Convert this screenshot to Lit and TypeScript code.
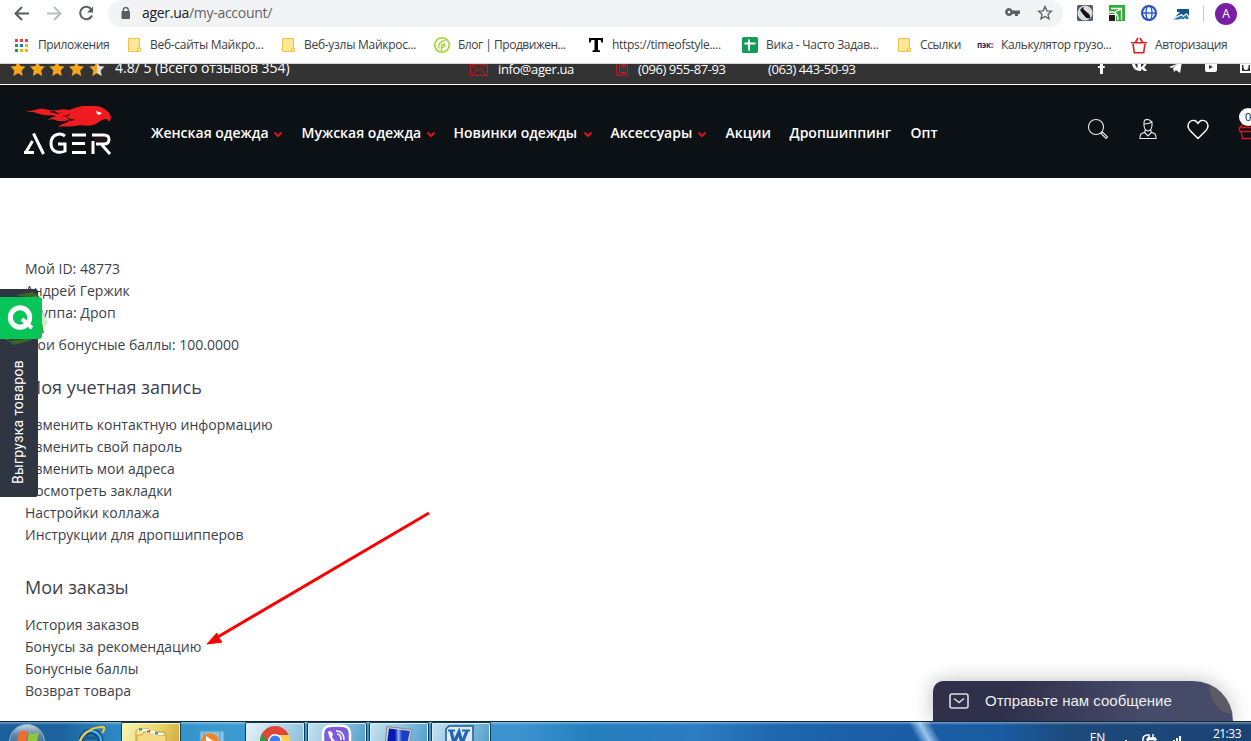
import { LitElement, html, css, svg } from "lit";
import { customElement } from "lit/decorators.js";
import { styleMap } from "lit/directives/style-map.js";

const icon = (w: number, h: number, body: unknown) =>
  html`<svg width=${w} height=${h} viewBox="0 0 ${w} ${h}" fill="none">${body}</svg>`;

const folder = icon(13, 16, svg`<path d="M.5 1.500h11v9.500h1v3.500h-12z" fill="#ffe694" stroke="#e8c44e"/><path d="M9.500 14v-3h2" stroke="#e8c44e"/>`);
const apps = icon(14, 14, svg`
  <path d="M0 1h3v3H0zM5 1h3v3H5zM10 1h3v3h-3z" fill="#ea4335"/>
  <path d="M0 6h3v3H0zM0 11h3v3H0z" fill="#1e9e54"/><path d="M5 6h3v3H5z" fill="#1a73e8"/>
  <path d="M10 6h3v3h-3zM5 11h3v3H5zM10 11h3v3h-3z" fill="#fbb004"/>`);
const blog = icon(16, 16, svg`<circle cx="8" cy="8" r="7.200" stroke="#a4d233" stroke-width="1.600"/><path d="M7.500 14.500V9q0-2 3.500-2M5 11.500q-1.500-7 6.500-8M8 10.500q2.500 0 3-3" stroke="#a4d233" stroke-width="1.400"/>`);
const bigT = icon(16, 16, svg`<path d="M1 1h14v4.500h-1.500l-1-2.500H10v10l2 .5V15H4.500v-1.500l2-.5V3h-3l-1 2.500H1z" fill="#000"/>`);
const sheets = icon(16, 16, svg`<rect width="16" height="16" rx="1.500" fill="#0f9d58"/><path d="M7 2.500v11M2.500 6.500h11" stroke="#fff" stroke-width="2"/>`);
const pek = html`<span class="pek">пэк<b>:</b></span>`;
const redBasket = icon(16, 17, svg`<path d="M0 5.700h16M2 7l1.300 8.700h9.400L14 7M4 6l3-5M12 6L9 1" stroke="#e02020" stroke-width="1.600"/>`);

interface Bookmark { w: number; gap: number; icon: unknown; label: string; ls: number }
const BOOKMARKS: Bookmark[] = [
  { w: 113, gap: 23, icon: apps, label: "Приложения", ls: -0.4 },
  { w: 154, gap: 22, icon: folder, label: "Веб-сайты Майкро...", ls: -0.28 },
  { w: 152, gap: 22, icon: folder, label: "Веб-узлы Майкрос...", ls: -0.28 },
  { w: 154, gap: 24, icon: blog, label: "Блог | Продвижен...", ls: -0.48 },
  { w: 154, gap: 24, icon: bigT, label: "https://timeofstyle....", ls: -0.3 },
  { w: 156, gap: 24, icon: sheets, label: "Вика - Часто Задав...", ls: -0.3 },
  { w: 79, gap: 22, icon: folder, label: "Ссылки", ls: -0.35 },
  { w: 154, gap: 24, icon: pek, label: "Калькулятор грузо...", ls: -0.38 },
  { w: 110, gap: 24, icon: redBasket, label: "Авторизация", ls: -0.4 },
];

const NAV = [
  { w: 150.5, label: "Женская одежда", sub: 122 },
  { w: 152, label: "Мужская одежда", sub: 124 },
  { w: 157, label: "Новинки одежды", sub: 129 },
  { w: 115, label: "Аксессуары", sub: 86 },
  { w: 64, label: "Акции", sub: 0 },
  { w: 121, label: "Дропшиппинг", sub: 0 },
  { w: 40, label: "Опт", sub: 0 },
];

@customElement("browser-chrome")
class BrowserChrome extends LitElement {
  static styles = css`
    :host { display: block; height: 64px; box-sizing: border-box; background: #fff; border-bottom: 1px solid #d4d5d7; overflow: hidden; color: #3c4043; font-family: "Open Sans", sans-serif; }
    svg { display: block; flex: none; }
    .bar { display: flex; align-items: center; height: 27px; padding-left: 14px; }
    .nav { display: flex; width: 94px; gap: 16px; }
    .omni { display: flex; align-items: center; width: 955px; height: 27px; box-sizing: border-box; background: #f1f3f4; border-radius: 14px; padding: 0 10px 0 13px; }
    .url { flex: 1; margin: -1px 0 0 11px; font: 14px/20px "Open Sans", sans-serif; letter-spacing: -.29px; color: #5f6368; white-space: nowrap; }
    .url b { font-weight: 400; color: #202124; }
    .star { margin-left: 17px; }
    .ext { display: flex; align-items: center; gap: 16px; margin-left: 14px; }
    .sep { width: 1px; height: 16px; background: #ccc; margin-left: -3px; }
    .avatar { width: 22px; height: 22px; border-radius: 50%; background: #7b1fa2; color: #fff; font-size: 12px; line-height: 22px; text-align: center; margin-left: -5px; }
    .marks { display: flex; align-items: center; height: 36px; padding-left: 15px; }
    .mark { display: flex; align-items: center; flex: none; }
    .ic { flex: none; }
    .lb { white-space: nowrap; font-size: 12px; line-height: 18px; }
    .pek { display: block; font: 700 8px/12px "Open Sans", sans-serif; color: #1a1a5c; letter-spacing: -.1px; }
    .pek b { color: #e02020; }
  `;
  render() {
    return html`
      <div class="bar">
        <div class="nav">
          ${icon(16, 20, svg`<path d="M15 9.500H2M8 3L1.500 9.500 8 16" stroke="#5a5d61" stroke-width="2"/>`)}
          ${icon(16, 20, svg`<path d="M1 9.500h13M8 3l6.500 6.500L8 16" stroke="#babcbe" stroke-width="2"/>`)}
          ${icon(16, 20, svg`<path d="M13.500 5.500A6.200 6.200 0 1 0 14 11.500" stroke="#5a5d61" stroke-width="2"/><path d="M15 2.500v6H9z" fill="#5a5d61"/>`)}
        </div>
        <div class="omni">
          ${icon(10, 14, svg`<rect x=".5" y="4" width="8.500" height="8" rx="1" fill="#5a5d61"/><path d="M2.300 5V3a2.500 2.500 0 0 1 5 0v2" stroke="#5a5d61" stroke-width="1.300"/>`)}
          <span class="url"><b>ager.ua</b>/my-account/</span>
          ${icon(15, 15, svg`<path fill-rule="evenodd" d="M4 2a4 4 0 0 1 3.600 2.500H15V8h-2v2h-3V8H7.600A4 4 0 1 1 4 2zm0 2.700a1.400 1.400 0 1 0 0 2.800 1.400 1.400 0 0 0 0-2.800z" fill="#5a5d61"/>`)}
          <span class="star">${icon(16, 17, svg`<path d="M8 1.500l1.900 4.300 4.600.4-3.500 3.100 1 4.600L8 11.500l-4 2.400 1-4.600L1.500 6.200l4.600-.4z" stroke="#5a5d61" stroke-width="1.300"/>`)}</span>
        </div>
        <div class="ext">
          ${icon(16, 17, svg`<rect width="16" height="16" rx="1.500" fill="#515b69"/><circle cx="8" cy="8" r="7.500" fill="#d9dde2"/><path d="M5.500 4L12 9.500l.8 3.500-3.600-.5L4 6z" fill="#111" stroke="#111"/><path d="M3.500 5.500l3-3" stroke="#111" stroke-width="1.500"/>`)}
          ${icon(16, 17, svg`<path d="M0 0h16v16H7V9H0z" fill="#2fad36"/><path d="M0 10h6v6H0z" fill="#241c1c"/><path d="M2 3.500h10.500V15M0 7h4q5 1 5 8M12 4L5 7.500" stroke="#fff" stroke-width="1.300"/>`)}
          ${icon(16, 17, svg`<circle cx="8" cy="8" r="7" stroke="#234ec2" stroke-width="2" fill="#edf3ff"/><ellipse cx="8" cy="8" rx="3" ry="7" stroke="#234ec2" stroke-width="1.300"/><path d="M1 8h14" stroke="#234ec2" stroke-width="1.300"/>`)}
          ${icon(17, 14, svg`<path d="M4 2h12v7l-2.500-3-3 2.500L8.500 7 2 10l5-5H4z" fill="#14558b"/><path d="M0 12.500l8-4 2.500 1.500 3-2.500L16 12h-3l-1-1-2 1.500-2-1-2 1z" fill="#2776ad"/>`)}
          <span class="sep"></span><span></span>
          <span class="avatar" style="margin-left:-21px">A</span>
        </div>
      </div>
      <div class="marks">
        ${BOOKMARKS.map((b) => html`<div class="mark" style=${styleMap({ width: b.w + "px" })}>
          <span class="ic" style=${styleMap({ width: b.gap + "px" })}>${b.icon}</span><span class="lb" style=${styleMap({ letterSpacing: b.ls + "px" })}>${b.label}</span></div>`)}
      </div>`;
  }
}

@customElement("shop-header")
class ShopHeader extends LitElement {
  static styles = css`
    :host { display: block; color: #fff; font-family: "Open Sans", sans-serif; }
    svg { display: block; flex: none; }
    .top { display: flex; align-items: center; height: 20px; background: #333; border-bottom: 1px solid #fff; overflow: hidden; white-space: nowrap; padding-left: 10px; }
    .top > * { flex: none; }
    .rate { width: 355px; font-size: 14px; line-height: 20px; margin-top: -12px; }
    .mail, .p1, .p2 { font-size: 13px; line-height: 20px; margin-top: -11px; letter-spacing: -.42px; }
    .stars { width: 105px; margin-top: -12px; }
    .mi { width: 28px; margin-top: -9px; }
    .mail { width: 118px; letter-spacing: -.4px; }
    .pi { width: 22px; margin-top: -9px; }
    .p1 { width: 130px; }
    .p2 { width: 323px; }
    .soc { margin-top: -14px; }
    .head { display: flex; align-items: center; height: 93px; background: #0c1115; box-sizing: border-box; padding-left: 23px; overflow: hidden; }
    .logo { width: 128px; margin-top: -2px; }
    .menu { display: flex; width: 936px; margin-top: 2px; }
    .item { display: grid; font-size: 14px; font-weight: 600; line-height: 20px; white-space: nowrap; align-items: center; flex: none; }
    .item svg { margin-top: 3px; }
    .acts { flex: none; margin-top: -1px; }
    text { font: 11px "Open Sans", sans-serif; }
  `;
  render() {
    const star = (x: number, fill: string) => svg`<path transform="translate(${x} 0)" d="M7.500 0l2.300 5 5.200.6-3.800 3.800 1 5.600-4.700-2.700L2.800 15l1-5.600L0 5.600 5.200 5z" fill=${fill}/>`;
    return html`
      <div class="top">
        <span class="stars">${icon(105, 15, svg`<defs><linearGradient id="h"><stop offset=".5" stop-color="#f9a51b"/><stop offset=".5" stop-color="#ddd"/></linearGradient></defs>
          ${star(0.5, "#f9a51b")}${star(20, "#f9a51b")}${star(39.500, "#f9a51b")}${star(59, "#f9a51b")}${star(79.500, "url(#h)")}`)}</span>
        <span class="rate">4.8/ 5 (Всего отзывов 354)</span>
        <span class="mi">${icon(18, 14, svg`<path d="M.5 1.500h17v11H.5zM2 2l7 5.500L16 2M2 12l5-5m9 5l-5-5" stroke="#c9161c"/>`)}</span>
        <span class="mail">info@ager.ua</span>
        <span class="pi">${icon(13, 14, svg`<path d="M.5 0v12.500h11V0M3.500 0v12" stroke="#c9161c"/><path d="M5 0h5v4H5zM5 5h1v1H5zM7 5h1v1H7zM9 5h1v1H9zM5 7h1v1H5zM7 7h1v1H7zM9 7h1v1H9zM5 9h5v2H5z" fill="#c9161c"/>`)}</span>
        <span class="p1">(096) 955-87-93</span>
        <span class="p2">(063) 443-50-93</span>
        <span class="soc">${icon(165, 14, svg`<g fill="#fff">
          <path d="M9 14V8H7V6h2V4c0-2 1-3 3-3h2v2h-1c-1 0-1 .5-1 1v2h2l-.5 2H12v6z"/>
          <path d="M41 4h3c1 3 2 4 2.500 4V4H50v3c1 0 2-1.500 3-3h2.500c-.5 1.500-1.500 3-2.500 3.500 1 .5 2 1.500 3 3.500h-3c-1-1-2-2-3-2v2c-5 0-8-2-9-7z"/>
          <path d="M78 7l13-5-2 11-4-3-2 2-1-4 5-4-6 4z"/>
          <path fill-rule="evenodd" d="M115 2h9q2 0 2 2v6q0 2-2 2h-8q-2 0-2-2V4q0-2 1-2zm3 3v4l4-2z"/>
          <path fill-rule="evenodd" d="M149 1h12v12h-12zm2 4v6h8V5h-1.500q.5 5-2.500 5t-2.500-5z"/><circle cx="155" cy="6.500" r="1.800"/></g>`)}</span>
      </div>
      <div class="head">
        <div class="logo">${icon(90, 50, svg`
          <path d="M2 4C9 7 14 2 21 3c6 1 7 2 14 1 4-1 7-1 10 0 3 0 5-2 10-3 7-2 16-2 23 0 6 3 9 6 10 10 0 2-1 3-2 5-1-3-4-4-7-2-4 2-5 4-9 5-7 2-11-1-18 1-7 1-12 0-17 1 4-4 8-3 12-7-5 1-6 1-11 1-4 0-5-3-11-1 3-3 5-3 8-3-4-3-8-1-12-2-7-1-7-3-14-3C6 6 4 5 2 4z" fill="#f01b20"/>
          <path d="M26 6q5-2 7 0t7 0q-5 3-9 1zM39 10q6 0 8-3-1 5-8 3zM49 15q-4-1-5-4 3 3 8 2z" fill="#0c1115"/>
          <path d="M73 5l6 2q-3 3-5 1z" fill="#fff"/>
          <path d="M71 29h12v7H71z" fill="#241314"/>
          <path d="M1 46.500h10M3 46L9.500 35M10.500 27.500L20.500 48M42 30q-4-3-8-1.500-6 2-6 9t6 8.500q4 1 8-1v-7h-7M49 29h14M49 37.500h13M49 46.500h14M70 35v13M69 29h12q5 0 5 4.500t-5 4.500h-8M79 39l8 9" stroke="#fff" stroke-width="3"/>`)}</div>
        <nav class="menu">
          ${NAV.map((n) => html`<div class="item" style=${styleMap({ width: n.w + "px", gridTemplateColumns: (n.sub || n.w) + "px 10px" })}><span>${n.label}</span>${n.sub ? icon(10, 7, svg`<path d="M1.500 1.500L5 5l3.500-3.500" stroke="#d9161c" stroke-width="2"/>`) : ""}</div>`)}
        </nav>
        <div class="acts">${icon(164, 46, svg`
          <g stroke="#e8e8e8" stroke-width="1.100"><circle cx="9" cy="19" r="7.500"/><path d="M14 25.500l1.500-1.500 5 5-1.500 1.500z"/>
          <path d="M58 12q3-2 7 2v3q0 5-4 6-4-1-4-6v-3q1-2 1-2zM57 16q5 0 8-2M58 22v3l3 3 3-3v-3M58 24l-4 2q-1 1-1 4.500h16q0-3.500-1-4.500l-4-2"/></g>
          <path d="M111 30.500l-8-8q-4-5 0-9 5-3 8 2 3-5 8-2 4 4 0 9z" stroke="#fff" stroke-width="1.400"/>
          <path d="M152 19.500h14M154 23l1.500 7.500H166M153 19l7-6M152 19.500l1 4h13" stroke="#d9161c" stroke-width="1.300"/>
          <circle cx="161" cy="9" r="9" fill="#fff"/><text x="158" y="13" fill="#111">0</text>`)}</div>
      </div>`;
  }
}

@customElement("task-bar")
class TaskBar extends LitElement {
  static styles = css`
    :host { display: flex; height: 20px; box-sizing: border-box; border-top: 1px solid #10263b; overflow: hidden; position: relative; flex: none;
      background: linear-gradient(#ffffff66, #ffffff00 3px), linear-gradient(61deg, transparent 803px, #9cc5ef 813px, transparent 823px), linear-gradient(90deg, #1c609c 0, #1b629e 60px, #2e8bc6 120px, #3b9bd1 230px, #3b93cf 520px, #257fbf 590px, #2c7cc3 700px, #1d66ad 780px, #1a60a9 850px, #195ca2 1000px, #1d4a7b 1070px, #1a4375 1251px); }
    svg { display: block; }
    .slot { height: 20px; overflow: hidden; flex: none; box-sizing: border-box; }
    .b { width: 60px; margin-right: 2px; border: 1px solid #143a54; border-bottom: 0; border-radius: 2px 2px 0 0; box-shadow: inset 0 0 0 1px #d9effa; background: linear-gradient(110deg, #c8e2ef, #8ec4e0 50%, #559fcb); }
    .f { background: linear-gradient(110deg, #faf4b4, #e5d668 60%, #d3a940); box-shadow: inset 0 0 0 1px #fff6bb; }
    .chrome { background: linear-gradient(110deg, #e6f1f6, #b0d4e7 60%, #8cbedb); }
    .tray { display: flex; flex: 1; justify-content: flex-end; color: #fff; font: 12px/16px "Open Sans", sans-serif; padding-right: 10px; }
    .en { margin: 8px 20px 0 0; height: 16px; white-space: nowrap; letter-spacing: -.3px; }
    .time { margin: 4px 0 0 24px; letter-spacing: -.5px; white-space: nowrap; }
  `;
  render() {
    return html`
      <div class="slot" style="width:121px">${icon(121, 20, svg`<defs><linearGradient id="o" x2="0" y2="1"><stop stop-color="#c5d8e6"/><stop offset=".3" stop-color="#5f86a6"/><stop offset="1" stop-color="#164d80"/></linearGradient></defs>
        <circle cx="27" cy="20" r="17.500" fill="url(#o)" stroke="#8cb5d0"/>
        <path d="M19 10q5-3 9 0l-2 10h-9z" fill="#ef6a2d"/><path d="M29 11q5 2 10-1l-2 10H27z" fill="#8dc63f"/>
        <circle cx="91" cy="19" r="9.500" stroke="#114d83" stroke-width="6"/><circle cx="91" cy="19" r="10" stroke="#4fb8ed" stroke-width="2"/><path d="M84 16h15" stroke="#18588d" stroke-width="3"/><path d="M79 20q8-15 24-15 3 1-1 6" stroke="#f5c63a" stroke-width="2"/>`)}</div>
      <div class="slot b f">${icon(58, 20, svg`<path d="M14 20V8l2-2h11l2 3h14v11z" fill="#f8e6a0" stroke="#c89d38"/><path d="M15 12h5l2-3h12l2 3h8v8H15z" fill="#f6db82" stroke="#c9a442"/><path d="M16 7h11M24 9h9M32 11h9" stroke="#fff" stroke-width="2"/><path d="M17 6.500h3" stroke="#159a3b" stroke-width="2"/><path d="M25 8.500h3" stroke="#d54029" stroke-width="2"/><path d="M33 10.500h3" stroke="#198cd5" stroke-width="2"/>`)}</div>
      <div class="slot" style="width:62px">${icon(62, 20, svg`<path d="M17 9h20v11H17zM21 9h20v11H21z" fill="#8cc5e4" stroke="#4f9fcc"/><circle cx="27" cy="20" r="9" fill="#f38521"/><path d="M23 14l9 6h-9z" fill="#fff"/>`)}</div>
      <div class="slot b chrome">${icon(58, 20, svg`<circle cx="29" cy="18" r="15" fill="#e0453a"/><path d="M16 11l9 12h-11q-1-6 2-12z" fill="#2b9a4b"/><path d="M31 12h12q2 4 1 9H34z" fill="#ffd04a"/><circle cx="29" cy="18" r="7" fill="#fff"/><circle cx="29" cy="18" r="5.500" fill="#3b7fed"/>`)}</div>
      <div class="slot b">${icon(58, 20, svg`<path d="M15 20V11q0-7 6-8 8-1 15 0 6 1 6 8v9z" fill="#7b5be0" stroke="#fff" stroke-width="2.500"/><path d="M20 9q2-3 5 2l-1 3q2 4 5 5v2q-7-1-9-12z" fill="#fff"/><path d="M28 8q8 0 8 9M29 11q4 0 4 6" stroke="#fff" stroke-width="1.500"/>`)}</div>
      <div class="slot b">${icon(58, 20, svg`<defs><linearGradient id="m"><stop offset=".35" stop-color="#0719b5"/><stop offset=".5" stop-color="#8fb2ef"/><stop offset=".65" stop-color="#1b3fc4"/></linearGradient></defs><path d="M17 3.500l25 3-3 15H15z" fill="#c9d2d8" stroke="#888"/><path d="M19 5.500l21 2.500-3 13H17z" fill="url(#m)"/>`)}</div>
      <div class="slot b">${icon(58, 20, svg`<path d="M14 20V6l3-3h24v17z" fill="#dbeaf8" stroke="#245694" stroke-width="1.500"/><path d="M16 7.500h7M30 7.500h8" stroke="#2363b1" stroke-width="2"/><path d="M19 8l3 12 5-11 3 11 5-12" stroke="#2363b1" stroke-width="3.200"/>`)}</div>
      <div class="tray">
        <span class="en">EN</span>
        ${icon(64, 20, svg`<path d="M0 19h2" stroke="#fff" stroke-width="2"/><path d="M18 20v-4q1-3 5-3M23 16h7v4h-7zM24 12v4M28 12v4M21 17.500h11" stroke="#fff" stroke-width="1.500"/><path d="M48 18h2v2h-2zM51 16h2v4h-2zM54 14h2v6h-2z" fill="#fff"/>`)}
        <span class="time">21:33</span>
      </div>`;
  }
}

@customElement("app-root")
class AppRoot extends LitElement {
  static styles = css`
    :host { display: flex; flex-direction: column; width: 1251px; height: 741px; overflow: hidden; background: #fff; font-family: "Open Sans", sans-serif; }
    svg { display: block; }
    main { flex: 1; min-height: 0; position: relative; overflow: hidden; padding: 80px 0 0 25px; box-sizing: border-box; color: #3b3f4c; font-size: 14px; line-height: 22px; }
    p, h2, ul { margin: 0; padding: 0; list-style: none; }
    .pts { margin-top: 10px; }
    h2 { font-size: 18px; font-weight: 400; line-height: 22px; }
    .h1 { margin: 20px 0 16px; }
    .h2 { margin: 30px 0 16px; }
    .tab { position: absolute; left: 0; top: 111px; width: 38px; height: 208px; background: #2f3541; border-radius: 0 3px 3px 0; }
    .q { position: absolute; left: 0; top: 1px; }
    .v { position: absolute; left: 8px; bottom: 13px; writing-mode: vertical-rl; transform: rotate(180deg); font: 14px/20px Roboto, sans-serif; letter-spacing: .28px; color: #fff; white-space: nowrap; }
    .arrow { position: absolute; left: 200px; top: 326px; }
    .chat { position: absolute; left: 933px; bottom: 0; width: 300px; height: 40px; box-sizing: border-box; border-radius: 10px 40px 0 0; overflow: hidden; display: flex; align-items: center; padding-left: 16px; gap: 16px; background: linear-gradient(100deg, #30304b 25%, #464b69 70%); color: #eee; font: 15px/20px "Liberation Sans", sans-serif; white-space: nowrap; }
    .shadow { position: absolute; left: 933px; bottom: 0; width: 300px; height: 40px; border-radius: 10px 40px 0 0; box-shadow: 0 0 20px #0004; }
    .chat::after { content: ""; position: absolute; right: -23px; top: -20px; width: 46px; height: 53px; border-radius: 50%; background: #5c5a65; }
  `;
  render() {
    const list = (items: string[]) => html`<ul>${items.map((t) => html`<li>${t}</li>`)}</ul>`;
    return html`
      <browser-chrome></browser-chrome>
      <shop-header></shop-header>
      <main>
        <p>Мой ID: 48773</p><p>Андрей Гержик</p><p>Группа: Дроп</p>
        <p class="pts">Мои бонусные баллы: 100.0000</p>
        <h2 class="h1">Моя учетная запись</h2>
        ${list(["Изменить контактную информацию", "Изменить свой пароль", "Изменить мои адреса", "Посмотреть закладки", "Настройки коллажа", "Инструкции для дропшипперов"])}
        <h2 class="h2">Мои заказы</h2>
        ${list(["История заказов", "Бонусы за рекомендацию", "Бонусные баллы", "Возврат товара"])}
        <div class="tab">
          <span class="q">${icon(52, 60, svg`<path d="M15 5l18-3 6 4v3zM8 51l6 4 18-5v-2z" fill="#3c6425"/><path d="M40 18l8 14-3 5-4 1z" fill="#d8ead0"/><path d="M4 12l33-6 7 37-38 7z" fill="#4e981c"/><path d="M0 7h39q3 0 3 3v36q0 3-3 3H0z" fill="#08c559"/><circle cx="20" cy="27.500" r="9.700" stroke="#fff" stroke-width="5"/><path d="M22 29l10 9" stroke="#fff" stroke-width="4"/>`)}</span>
          <span class="v">Выгрузка товаров</span>
        </div>
        <div class="arrow">${icon(240, 150, svg`<path d="M229 9L16 134" stroke="#fb0000" stroke-width="3"/><path d="M7 140l10-11 1 4 4 5z" fill="#fb0000" stroke="#fb0000"/>`)}</div>
        <div class="shadow"></div>
        <div class="chat">${icon(20, 16, svg`<rect x="1" y="1" width="18" height="14" rx="2" stroke="#ddd" stroke-width="1.600"/><path d="M5 5.500l5 4 5-4" stroke="#ddd" stroke-width="1.500"/>`)}<span>Отправьте нам сообщение</span></div>
      </main>
      <task-bar></task-bar>`;
  }
}
